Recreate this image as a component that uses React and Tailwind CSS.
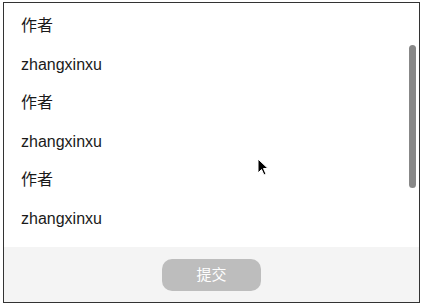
const rows = ['作者', 'zhangxinxu', '作者', 'zhangxinxu', '作者', 'zhangxinxu']

export default function App() {
  return (
    <div
      className="pt-[2px] pl-[3px] bg-white w-[428px] h-[308px]"
      style={{ fontFamily: "'Liberation Sans', 'Noto Sans CJK SC', sans-serif" }}
    >
      <div className="relative w-[417px] h-[301px] border border-[#333] flex flex-col bg-white">
        <div className="relative flex-1 overflow-hidden pt-[4px]">
          {rows.map((r, i) => (
            <div key={i} className="px-[17px] text-[16px] leading-[38.6px] text-[#1a1a1a]">
              {r}
            </div>
          ))}
          {/* scrollbar */}
          <div className="absolute right-[3px] top-[42px] w-[7px] h-[143px] rounded-full bg-[#888]" />
          {/* mouse pointer */}
          <svg className="absolute left-[253px] top-[155px]" width="14" height="20" viewBox="0 0 14 20">
            <path d="M1 1 L1 15 L4.5 11.5 L7 17 L9 16 L6.5 10.5 L11 10.5 Z" fill="#000" stroke="#fff" strokeWidth="1" />
          </svg>
        </div>
        <div className="h-[55px] bg-[#f4f4f4] flex items-center justify-center">
          <button className="w-[99px] h-[32px] rounded-[10px] bg-[#bdbdbd] text-white text-[15px] leading-none">
            提交
          </button>
        </div>
      </div>
    </div>
  )
}
